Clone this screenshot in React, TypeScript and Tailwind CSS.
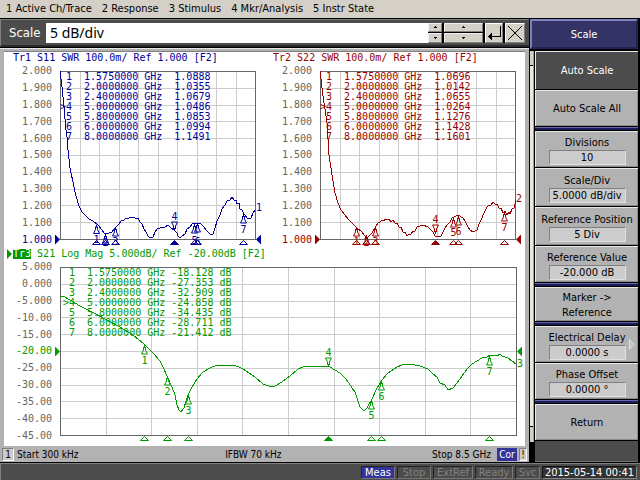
import React from "react";

type Marker = {
  id: number;
  freq: string;
  value: string;
  x: number;
  y: number;
  labelY?: number;
};

type Tone = "blue" | "red" | "green";

type ChartProps = {
  name: string;
  title: string;
  tone: Tone;
  active?: boolean;
  width: number;
  labels: string[];
  refIndex: number;
  points: string;
  markers: Marker[];
  unit?: string;
  endY: number;
};

const TONES: Record<Tone, { text: string; hex: string }> = {
  blue: { text: "text-[#000099]", hex: "#000099" },
  red: { text: "text-[#990000]", hex: "#990000" },
  green: { text: "text-[#009900]", hex: "#009900" },
};

const MONO = "font-['DejaVu_Sans_Mono','Liberation_Mono',monospace]";
const H = 169;

function MarkerShape({ m, color }: { m: Marker; color: string }) {
  const current = m.id === 4;
  const dir = current ? -1 : 1;
  const { x, y } = m;
  return (
    <g>
      <path
        d={`M${x} ${y}V${y + 3 * dir}M${x - 1} ${y + 2 * dir}V${y + 5 * dir}L${x - 3} ${y + 9 * dir}H${x + 3}L${x + 1} ${y + 5 * dir}V${y + 2 * dir}`}
        fill="none"
        stroke={color}
      />
      <text
        x={x}
        y={m.labelY ?? (current ? y - 11 : y + 19)}
        textAnchor="middle"
        fontSize="10"
        fill={color}
      >
        {m.id}
      </text>
      <path
        d={`M${x - 4} 173.5L${x} 169.5L${x + 4} 173.5Z`}
        fill={current ? color : "none"}
        stroke={color}
      />
    </g>
  );
}

function Chart(p: ChartProps) {
  const tone = TONES[p.tone];
  const W = p.width;
  const steps = Array.from({ length: 9 }, (_, i) => i + 1);
  const refY = 0.5 + (168 / 10) * p.refIndex;
  return (
    <section className={`min-w-0 ${MONO} text-[10px] leading-[10px]`}>
      <h2 className={`flex items-center h-3 whitespace-pre ${tone.text}`}>
        <span className="w-[9px] flex justify-end">
          {p.active && (
            <svg width="6" height="10" viewBox="0 0 6 10">
              <path d="M0 0L5 5L0 10Z" fill={tone.hex} />
            </svg>
          )}
        </span>
        <span className={p.active ? "bg-[#009900] text-white" : ""}>{p.name}</span>
        <span> {p.title}</span>
      </h2>
      <div className="flex mt-[7px] pr-2">
        <ol className="w-14 pr-2 -my-[5px] flex flex-col justify-between text-right text-[#666660]">
          {p.labels.map((l, i) => (
            <li key={l} className={i === p.refIndex ? tone.text : ""}>
              {l}
            </li>
          ))}
        </ol>
        <div className="relative flex-1 min-w-0">
          <svg
            viewBox={`0 0 ${W} ${H}`}
            className="block w-full h-auto overflow-visible"
            role="img"
            aria-label={`${p.name} ${p.title}`}
          >
            <g stroke="#cccccc" shapeRendering="crispEdges">
              {steps.map((i) => (
                <line key={`v${i}`} x1={0.5 + ((W - 1) / 10) * i} x2={0.5 + ((W - 1) / 10) * i} y1="0" y2={H} />
              ))}
              {steps.map((i) => (
                <line key={`h${i}`} x1="0" x2={W} y1={0.5 + 16.8 * i} y2={0.5 + 16.8 * i} />
              ))}
            </g>
            <rect x="0.5" y="0.5" width={W - 1} height={H - 1} fill="none" stroke="#666666" />
            <polyline points={p.points} fill="none" stroke={tone.hex} strokeWidth="1" shapeRendering="crispEdges" />
            {p.markers.map((m) => (
              <MarkerShape key={m.id} m={m} color={tone.hex} />
            ))}
            <path d={`M-5 ${refY - 5}L0 ${refY}L-5 ${refY + 5}Z`} fill={tone.hex} />
            <path d={`M${W + 5} ${refY - 5}L${W} ${refY}L${W + 5} ${refY + 5}Z`} fill={tone.hex} />
            <text x={W} y={p.endY} fontSize="10" fill={tone.hex}>
              {p.name.slice(2)}
            </text>
          </svg>
          <table className={`absolute top-px left-0 whitespace-pre ${tone.text}`}>
            <tbody>
              {p.markers.map((m) => (
                <tr key={m.id}>
                  <th className={`font-normal text-right ${p.unit ? "w-[15px]" : "w-3"} p-0`}>
                    {m.id === 4 ? ">4" : m.id}
                  </th>
                  <td className="p-0 pl-3">{m.freq} GHz</td>
                  <td className={`p-0 ${p.unit ? "pl-1.5" : "pl-3"}`}>
                    {m.value}
                    {p.unit ? ` ${p.unit}` : ""}
                  </td>
                </tr>
              ))}
            </tbody>
          </table>
        </div>
      </div>
    </section>
  );
}

const SWR_LABELS = ["2.000", "1.900", "1.800", "1.700", "1.600", "1.500", "1.400", "1.300", "1.200", "1.100", "1.000"];
const LOG_LABELS = ["5.000", "0.000", "-5.000", "-10.00", "-15.00", "-20.00", "-25.00", "-30.00", "-35.00", "-40.00", "-45.00"];
const FREQS = ["1.5750000", "2.0000000", "2.4000000", "5.0000000", "5.8000000", "6.0000000", "8.0000000"];

function markers(rows: [string, number, number, number?][]): Marker[] {
  return rows.map(([value, x, y, labelY], i) => ({ id: i + 1, freq: FREQS[i], value, x, y, labelY }));
}

const S11 = markers([
  ["1.0888", 36.5, 153.5, 172],
  ["1.0355", 45.5, 163, 175],
  ["1.0679", 55.5, 156, 174],
  ["1.0486", 114.5, 160],
  ["1.0853", 134.5, 153, 173],
  ["1.0994", 137.5, 152, 174],
  ["1.1491", 183.5, 143, 162],
]);
const S22 = markers([
  ["1.0696", 36.5, 156, 174],
  ["1.0142", 46.5, 164, 175],
  ["1.0655", 55.5, 156, 174],
  ["1.0264", 115.5, 163],
  ["1.1276", 133.5, 147, 165],
  ["1.1428", 138.5, 145, 164],
  ["1.1601", 184.5, 141, 160],
]);
const S21 = markers([
  ["-18.128", 84.5, 78],
  ["-27.353", 107.5, 109],
  ["-32.909", 128.5, 128],
  ["-24.858", 268.5, 100],
  ["-34.435", 311.5, 133],
  ["-28.711", 321.5, 114],
  ["-21.412", 429.5, 89],
]);

const S11_POINTS =
  "0,0 2,16 4,36 6,59 7,66 8,79 10,97 14,116 16,125 19,135 22,141 25,144 29,148 33,150 38,154 42,159 44,162 46,163 49,162 52,161 54,158 56,156 59,153 61,150 64,149 66,147 68,148 70,146 72,147 74,146 76,148 78,147 80,151 82,153 84,158 86,161 88,165 90,167 93,166 95,161 97,158 100,157 103,156 105,156 108,154 111,157 114,159 117,162 118,165 120,167 122,165 125,163 127,158 130,156 132,153 134,152 136,153 139,152 141,153 144,156 147,160 151,164 153,163 155,157 157,150 160,144 162,138 165,134 167,130 170,129 172,126 174,129 176,129 177,133 179,132 180,138 182,139 184,143 187,147 191,147 193,142 195,139";
const S22_POINTS =
  "0,0 3,25 5,38 7,52 9,84 13,110 15,122 18,132 21,139 25,144 28,148 32,152 37,157 42,161 44,164 47,167 50,164 52,162 55,157 58,152 60,151 62,149 64,150 65,148 67,149 69,148 71,151 73,149 75,152 77,152 79,156 81,156 83,161 85,161 87,165 89,163 91,163 93,160 95,160 97,156 100,155 103,154 108,156 110,158 113,161 115,165 117,166 121,165 123,161 125,157 127,154 130,151 132,147 134,146 136,145 139,144 141,146 143,147 145,150 148,156 150,159 153,161 157,159 159,153 161,149 164,142 167,136 169,134 171,134 173,131 175,133 177,133 179,137 181,137 183,142 185,140 187,144 189,141 190,143 192,138 194,137 196,129";
const S21_POINTS =
  "0,29 3,29 10,33 20,39 32,45 47,53 60,60 73,68 84,77 93,86 100,94 103,100 107,109 112,120 115,128 117,138 119,143 121,145 124,141 126,134 128,128 132,120 137,112 143,105 150,101 157,98 173,98 179,100 183,102 195,110 203,117 209,119 215,119 222,115 230,109 238,102 243,100 248,99 260,99 270,100 275,103 280,106 286,112 289,116 292,121 295,125 297,131 300,140 303,143 305,143 307,141 312,132 317,121 322,113 328,106 337,100 342,98 348,97 355,98 360,99 368,102 373,107 377,110 380,116 385,118 388,123 393,121 400,112 404,106 408,101 412,97 417,94 422,91 427,90 430,88 437,89 440,87 442,89 448,91 452,94 456,97";

const RAISED = "border-t border-l border-[#e8e8e8] shadow-[inset_-1px_-1px_0_#8a8a8a]";
const SPIN = "flex items-center justify-center bg-[#d4d0c8] border border-t-[#f0f0f0] border-l-[#f0f0f0] border-b-[#808080] border-r-[#808080]";

function Spinner({ width, label }: { width: string; label: string }) {
  return (
    <div className={`flex flex-col gap-px h-5 ${width}`}>
      <button aria-label={`${label} up`} className={`${SPIN} flex-1`}>
        <svg width="3" height="2" viewBox="0 0 3 2" shapeRendering="crispEdges">
          <path d="M1 0h1v1h1v1H0V1h1z" />
        </svg>
      </button>
      <button aria-label={`${label} down`} className={`${SPIN} flex-1`}>
        <svg width="3" height="2" viewBox="0 0 3 2" shapeRendering="crispEdges">
          <path d="M0 0h3v1H2v1H1V1H0z" />
        </svg>
      </button>
    </div>
  );
}

function Divider() {
  return <div className="h-[3px] my-px bg-[#1c1c5c] border-t border-t-[#6666aa]" />;
}

function SoftKey({ label, value, height, dark, arrow }: { label: string; value?: string; height: string; dark?: boolean; arrow?: boolean }) {
  return (
    <button
      className={`relative flex flex-col items-center justify-center w-full ${height} ${RAISED} ${dark ? "bg-[#4c4c4c] text-white border-[#909090] shadow-none" : "bg-[#b2b2b2] text-black"}`}
    >
      <span className="leading-[15px] whitespace-pre-line">{label}</span>
      {value && (
        <span className="w-[77px] h-[15px] leading-[13px] bg-[#cccccc] border border-t-[#808080] border-l-[#808080] border-b-[#e0e0e0] border-r-[#e0e0e0]">
          {value}
        </span>
      )}
      {arrow && (
        <svg className="absolute right-[3px] top-3" width="6" height="11" viewBox="0 0 6 11">
          <path d="M0.5 0.5L5 5.5L0.5 10.5Z" fill="#c4c4c4" stroke="#dddddd" />
        </svg>
      )}
    </button>
  );
}

function Lamp({ text, width, on }: { text: string; width: string; on?: boolean }) {
  return (
    <span
      className={`${width} h-[13px] leading-[12px] text-center border border-t-[#222222] border-l-[#222222] border-b-[#777777] border-r-[#777777] ${on ? "bg-[#333399] text-white" : "bg-[#4c4c4c] text-[#808080]"}`}
    >
      {text}
    </span>
  );
}

export default function App() {
  return (
    <div className="bg-black font-['DejaVu_Sans_Condensed','DejaVu_Sans',sans-serif] text-[11px] text-black">
      <nav className="flex gap-2.5 h-[18px] px-1.5 bg-[#d4d0c8]">
        {["1 Active Ch/Trace", "2 Response", "3 Stimulus", "4 Mkr/Analysis", "5 Instr State"].map((t) => (
          <button key={t} className="leading-[18px] whitespace-nowrap">
            {t}
          </button>
        ))}
      </nav>

      <div className="flex pt-px">
        <main className="flex-1 min-w-0 mr-px">
          <div className="flex items-center h-7 pl-2 pr-1 bg-[#4c4c4c] border-t border-l border-t-[#808080] border-l-[#808080] border-b-2 border-b-[#2a2a2a]">
            <label htmlFor="entry" className="w-[37px] text-[13px] text-white">
              Scale
            </label>
            <input
              id="entry"
              defaultValue="5 dB/div"
              className="flex-1 min-w-0 h-5 px-1 bg-white font-['Noto_Sans',sans-serif] text-[14px] leading-5 outline-none"
            />
            <div className="flex gap-0.5 bg-black">
              <Spinner width="w-[14px]" label="Fine" />
              <Spinner width="w-[39px]" label="Coarse" />
              <button aria-label="Enter" className="w-[18px] h-5 bg-[#d4d0c8] border border-t-white border-l-white border-b-[#808080] border-r-[#808080]">
                <svg width="16" height="18" viewBox="0 0 16 18" fill="none" stroke="black" shapeRendering="crispEdges">
                  <path d="M14.5 2V12.5H2M3.5 11V14M4.5 10V15M5.5 9V16" />
                </svg>
              </button>
              <button aria-label="Close" className="w-5 h-5 bg-[#d4d0c8] border border-t-white border-l-white border-b-[#808080] border-r-[#808080]">
                <svg width="18" height="18" viewBox="0 0 18 18" stroke="black">
                  <path d="M2 2L16 16M16 2L2 16" />
                </svg>
              </button>
            </div>
          </div>

          <div className="mt-px bg-[#b2b2b2] border-t border-t-[#e8e8e8] px-1 pt-0.5">
            <div className="bg-white border-t border-t-[#808080] pb-2.5">
              <div className="grid grid-cols-2 pr-px">
                <Chart
                  name="Tr1"
                  title="S11 SWR 100.0m/ Ref 1.000 [F2]"
                  tone="blue"
                  width={196}
                  labels={SWR_LABELS}
                  refIndex={10}
                  points={S11_POINTS}
                  markers={S11}
                  endY={140}
                />
                <Chart
                  name="Tr2"
                  title="S22 SWR 100.0m/ Ref 1.000 [F2]"
                  tone="red"
                  width={196}
                  labels={SWR_LABELS}
                  refIndex={10}
                  points={S22_POINTS}
                  markers={S22}
                  endY={131}
                />
              </div>
              <div className="mt-2">
                <Chart
                  active
                  name="Tr3"
                  title="S21 Log Mag 5.000dB/ Ref -20.00dB [F2]"
                  tone="green"
                  width={457}
                  labels={LOG_LABELS}
                  refIndex={5}
                  points={S21_POINTS}
                  markers={S21}
                  unit="dB"
                  endY={100}
                />
              </div>
            </div>
            <footer className="flex items-center justify-between h-4 -mx-0.5 text-[10px]">
              <div className="flex flex-10 gap-[3px]">
                <span className="w-3 h-[13px] leading-[12px] text-center bg-[#cccccc] border border-t-[#808080] border-l-[#808080] border-b-white border-r-white">
                  1
                </span>
                <span className="leading-[13px]">Start 300 kHz</span>
              </div>
              <span className="leading-[13px]">IFBW 70 kHz</span>
              <div className="flex flex-11 justify-end gap-0.5">
                <span className="mr-1 leading-[13px]">Stop 8.5 GHz</span>
                <span className="w-5 h-[13px] leading-[13px] text-center bg-[#333399] text-white">Cor</span>
                <span className="w-2 h-[13px] leading-[12px] text-center bg-[#cccccc] border border-t-[#808080] border-l-[#808080] border-b-white border-r-white">
                  !
                </span>
              </div>
            </footer>
          </div>
        </main>

        <aside className="w-[110px] flex flex-col pr-0.5">
          <h1 className="h-[30px] pt-0.5 mb-0.5 flex items-center justify-center bg-[#333366] text-white border-2 border-t-[#8080c0] border-l-[#8080c0] border-b-[#222255] border-r-[#222255]">
            Scale
          </h1>
          <div className="flex flex-1">
            <div className="w-1 mr-px flex flex-col bg-[#ece8e0] border-r border-r-[#a0a0a0] mb-5">
              <div className="h-[15px] bg-[#d4d0c8] border-b border-b-black" />
              <div className="flex-1" />
              <div className="h-4 bg-[#d4d0c8] border-t border-t-black" />
            </div>
            <div className="flex-1 flex flex-col">
              <SoftKey height="h-[38px]" label="Auto Scale" dark />
              <div className="h-px" />
              <SoftKey height="h-9" label="Auto Scale All" />
              <Divider />
              <SoftKey height="h-9" label="Divisions" value="10" />
              <div className="h-px" />
              <SoftKey height="h-[38px]" label="Scale/Div" value="5.0000 dB/div" />
              <div className="h-px" />
              <SoftKey height="h-[38px]" label="Reference Position" value="5 Div" />
              <div className="h-px" />
              <SoftKey height="h-9" label="Reference Value" value="-20.000 dB" />
              <Divider />
              <SoftKey height="h-[34px]" label={"Marker ->\nReference"} />
              <Divider />
              <SoftKey height="h-9" label="Electrical Delay" value="0.0000 s" arrow />
              <div className="h-px" />
              <SoftKey height="h-9" label="Phase Offset" value="0.0000 °" />
              <Divider />
              <SoftKey height="h-9" label="Return" />
              <div className="flex-1 mt-px bg-[#4c4c4c] border-b border-b-[#707070]" />
            </div>
          </div>
        </aside>
      </div>

      <footer className="mt-px flex items-center justify-end gap-0.5 h-[17px] pr-[3px] bg-[#4c4c4c] border-t border-l border-[#808080]">
        <Lamp text="Meas" width="w-[34px]" on />
        <Lamp text="Stop" width="w-[34px]" />
        <Lamp text="ExtRef" width="w-[40px]" />
        <Lamp text="Ready" width="w-[38px]" />
        <Lamp text="Svc" width="w-[25px]" />
        <time className="w-[95px] h-[13px] leading-[12px] text-center whitespace-nowrap text-white bg-[#333333] border border-t-[#111111] border-l-[#111111] border-b-[#888888] border-r-[#888888]">
          2015-05-14 00:41
        </time>
      </footer>
      <div className="h-px" />
    </div>
  );
}
